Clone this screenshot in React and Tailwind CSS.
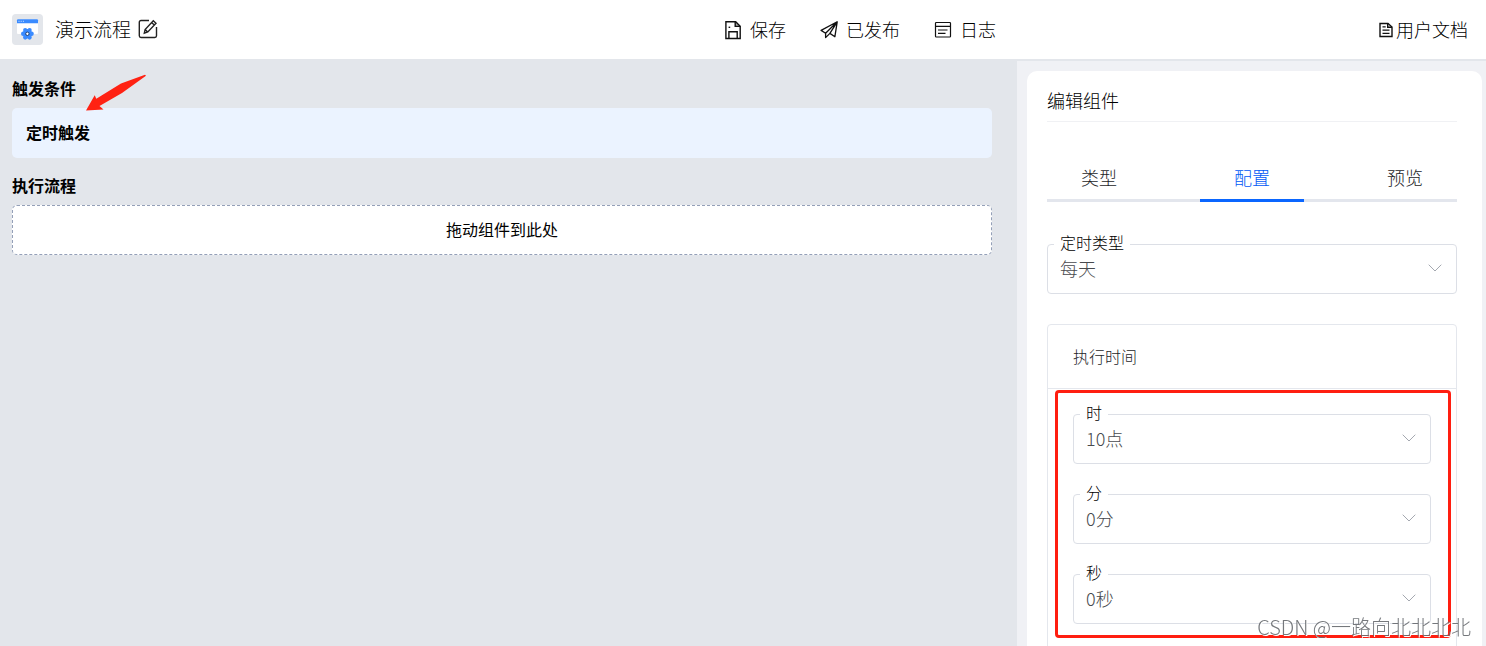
import { useState } from "react";

const tabs = ["类型", "配置", "预览"];

const timeFields = [
  { id: "hour", label: "时", options: ["10点", "11点", "12点"] },
  { id: "minute", label: "分", options: ["0分", "15分", "30分"] },
  { id: "second", label: "秒", options: ["0秒", "15秒", "30秒"] },
];

function LogoIcon() {
  return (
    <svg viewBox="0 0 31 31" className="size-[31px] shrink-0 rounded bg-[#e3e6eb]" aria-hidden="true">
      <rect x="5" y="5.5" width="21" height="14.5" rx="1" fill="#fff" />
      <path d="M5 9.2V6.3a1 1 0 0 1 1-1h19a1 1 0 0 1 1 1v2.9z" fill="#3a8bff" />
      <path d="M6.5 7.3h1M8.7 7.3h1M10.9 7.3h1" stroke="#fff" strokeOpacity=".8" />
      <g fill="#3a8bff">
        <circle cx="15.4" cy="19.8" r="4.8" />
        <circle cx="11.2" cy="19.8" r="2.2" />
        <circle cx="19.6" cy="19.8" r="2.2" />
        <circle cx="13.2" cy="16" r="2.1" />
        <circle cx="17.6" cy="16" r="2.1" />
        <circle cx="13.2" cy="23.6" r="2.1" />
        <circle cx="17.6" cy="23.6" r="2.1" />
      </g>
      <circle cx="15.4" cy="19.8" r="1.7" fill="#fff" stroke="#1d3f73" strokeWidth="1" />
    </svg>
  );
}

function EditIcon() {
  return (
    <svg viewBox="0 0 20 20" fill="none" stroke="#222" strokeWidth="1.4" className="size-5" aria-hidden="true">
      <path d="M11 1.5H3A1.7 1.7 0 0 0 1.3 3.2v13.6A1.7 1.7 0 0 0 3 18.5h13.8a1.7 1.7 0 0 0 1.7-1.7V8" />
      <path d="M6.3 14.2l.8-3.6 8.2-8.9 2.7 2.5-8.2 8.8zM13.6 3.6l2.7 2.5M7.1 10.6l2.6 2.4" />
    </svg>
  );
}

function SaveIcon() {
  return (
    <svg viewBox="0 0 18 20" fill="none" stroke="#111" strokeWidth="1.4" className="h-5 w-[18px]" aria-hidden="true">
      <path d="M1.9 1.7h9.8l4.5 4.6v12.2H1.9z" />
      <path d="M11.2 1.7v4.7h5" />
      <path d="M11.2 1.7l5 4.7h-5z" fill="#111" fillOpacity=".35" stroke="none" />
      <path d="M4.9 18.4v-6.6h8.3v6.6" />
      <path d="M4.6 7.3h1.6" />
    </svg>
  );
}

function SendIcon() {
  return (
    <svg viewBox="0 0 18 20" fill="none" stroke="#111" strokeWidth="1.3" strokeLinejoin="round" className="h-5 w-[18px]" aria-hidden="true">
      <path d="M17.2 1.8L1.1 10.4l4.5 2.8zM17.2 1.8L9.9 13.4l5 3.3zM5.6 13.2v4.4l4.3-4.2" />
    </svg>
  );
}

function LogIcon() {
  return (
    <svg viewBox="0 0 18 20" fill="none" stroke="#111" strokeWidth="1.2" className="h-5 w-[18px]" aria-hidden="true">
      <rect x="1.5" y="2.5" width="15" height="14.5" rx=".8" />
      <path d="M1.5 6.3h15M4 10h9.5M4 13.3h7.5" />
    </svg>
  );
}

function DocIcon() {
  return (
    <svg viewBox="0 0 14 16" fill="none" stroke="#111" strokeWidth="1.4" className="h-4 w-3.5" aria-hidden="true">
      <path d="M1 1.5h8L13 5v9.5H1z" />
      <path d="M8.7 1.5v3.8H13" />
      <path d="M3.5 4.8h3.2M3.5 8.2h7M3.5 11.4h7" strokeWidth="1.2" />
    </svg>
  );
}

function SelectField({ id, label, options }) {
  return (
    <fieldset className="min-w-0 rounded border border-[#dcdfe6]">
      <legend className="ml-1.5 px-1.5 pb-1 text-base leading-4 text-black">
        <label htmlFor={id}>{label}</label>
      </legend>
      <div className="relative mb-[11px]">
        <select
          id={id}
          className="block h-7 w-full cursor-pointer appearance-none bg-transparent pr-10 pl-3 text-lg leading-7 text-[#484a4e] outline-none"
        >
          {options.map((option) => (
            <option key={option}>{option}</option>
          ))}
        </select>
        <svg
          viewBox="0 0 14 8"
          fill="none"
          stroke="#a4a8b0"
          className="pointer-events-none absolute top-2.5 right-3.5 h-2 w-3.5"
          aria-hidden="true"
        >
          <path d="M.7.7L7 7 13.3.7" />
        </svg>
      </div>
    </fieldset>
  );
}

function Header() {
  return (
    <header className="flex h-[61px] shrink-0 items-center border-b-2 border-[#e3e6eb] bg-white text-lg">
      <div className="flex flex-1 items-center pl-3">
        <LogoIcon />
        <h1 className="ml-3 pb-0.5 text-[19px]">演示流程</h1>
        <button type="button" aria-label="编辑名称" className="ml-[7px] cursor-pointer">
          <EditIcon />
        </button>
      </div>
      <nav className="flex shrink-0 items-center gap-[34px]">
        <button type="button" className="flex cursor-pointer items-center gap-2">
          <SaveIcon />
          <span className="pb-0.5">保存</span>
        </button>
        <button type="button" className="flex cursor-pointer items-center gap-2">
          <SendIcon />
          <span className="pb-0.5">已发布</span>
        </button>
        <button type="button" className="flex cursor-pointer items-center gap-2">
          <LogIcon />
          <span className="pb-0.5">日志</span>
        </button>
      </nav>
      <div className="flex w-[490px] justify-end pr-[18px]">
        <a href="#docs" className="flex items-center gap-[3px]">
          <DocIcon />
          <span className="pb-0.5">用户文档</span>
        </a>
      </div>
    </header>
  );
}

function FlowCanvas() {
  return (
    <main className="relative min-w-0 flex-1 bg-[#e3e6eb] pt-[15px] pr-[25px] pl-3">
      <h2 className="mb-2 text-base leading-6 font-bold">触发条件</h2>
      <div className="flex h-[50px] items-center rounded-[5px] bg-[#ebf3ff] pb-0.5 pl-3.5 text-base font-bold">
        定时触发
      </div>
      <h2 className="mt-[15px] mb-2 text-base leading-6 font-bold">执行流程</h2>
      <div className="flex h-[50px] items-center justify-center rounded-[5px] border border-dashed border-[#94a0b8] bg-white pb-0.5 text-base font-normal">
        拖动组件到此处
      </div>

      {/* Arrow pointing at the trigger */}
      <svg viewBox="0 0 61 37" className="absolute top-[13px] left-[86px] h-[37px] w-[61px]" aria-hidden="true">
        <path d="M0 36.5L8.7 21.3 10.3 24.7 35 9.5 59 .7 60 1.7 36 19 13.5 32 17.5 35.5z" fill="#ff2213" />
      </svg>
    </main>
  );
}

function EditPanel() {
  const [active, setActive] = useState("配置");

  return (
    <aside className="w-[469px] shrink-0 bg-[#f0f1f5] pt-2.5 pr-1 pl-2.5">
      <div className="h-full rounded-t-[10px] bg-white pr-[25px] pl-5">
        <h2 className="border-b border-[#f0f1f4] pt-[15px] pb-[7px] text-lg leading-7">编辑组件</h2>

        <div role="tablist" className="mt-8 flex justify-between border-b-3 border-[#e3e6ed]">
          {tabs.map((tab) => (
            <button
              key={tab}
              type="button"
              role="tab"
              aria-selected={tab === active}
              onClick={() => setActive(tab)}
              className={
                tab === active
                  ? "-mb-[3px] h-12 w-[104px] cursor-pointer border-b-3 border-[#0a66ff] text-lg text-[#0058f5]"
                  : "-mb-[3px] h-12 w-[104px] cursor-pointer border-b-3 border-transparent text-lg text-[#1c1d1f]"
              }
            >
              {tab}
            </button>
          ))}
        </div>

        <div className="mt-8">
          <SelectField id="schedule" label="定时类型" options={["每天", "每周", "每月"]} />
        </div>

        <section className="mt-[30px] rounded border border-[#e4e7ed]">
          <h3 className="flex h-16 items-center border-b border-[#e4e7ed] px-[25px] pb-0.5 text-base text-[#1c1d1f]">
            执行时间
          </h3>
          <div className="relative flex flex-col gap-5 px-[25px] pt-[15px] pb-10">
            {timeFields.map((field) => (
              <SelectField key={field.id} {...field} />
            ))}
            {/* Highlight frame around the time fields */}
            <div className="pointer-events-none absolute top-px right-[5px] left-[7px] h-[248px] rounded border-3 border-[#ff1e10]" />
          </div>
        </section>
      </div>
    </aside>
  );
}

export default function App() {
  return (
    <div className="flex h-screen flex-col overflow-hidden bg-white font-['Noto_Sans_CJK_SC',sans-serif] font-light text-black">
      <Header />
      <div className="flex min-h-0 flex-1">
        <FlowCanvas />
        <EditPanel />
      </div>
      <p className="pointer-events-none fixed right-[15px] bottom-[5px] text-xl leading-7 text-[#66696e]/90 [text-shadow:1px_1px_0_#ffffff]">
        CSDN @一路向北北北北
      </p>
    </div>
  );
}
